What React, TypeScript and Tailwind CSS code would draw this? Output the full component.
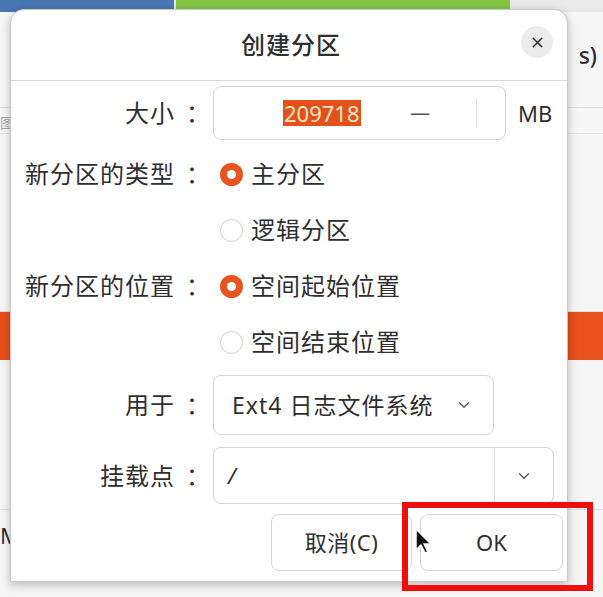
import { X, ChevronDown } from 'lucide-react'

const font = "font-['Noto_Sans','Noto_Sans_CJK_SC',sans-serif]"

function Radio({ checked, label }: { checked?: boolean; label: string }) {
  return (
    <div className="flex items-center gap-[8px] h-[56px]">
      {checked ? (
        <span className="w-[23px] h-[23px] rounded-full bg-[#e8531f] flex items-center justify-center">
          <span className="w-[9px] h-[9px] rounded-full bg-white"></span>
        </span>
      ) : (
        <span className="w-[23px] h-[23px] rounded-full border-[1.5px] border-[#cfcfcf] bg-white"></span>
      )}
      <span className="tracking-[1px]">{label}</span>
    </div>
  )
}

function Label({ text, className = '' }: { text: string; className?: string }) {
  return (
    <div className={`text-right pr-[2px] tracking-[1px] ${className}`}>
      {text}
      <span className="ml-[11px]">：</span>
    </div>
  )
}

function Cursor() {
  return (
    <svg width="18" height="28" viewBox="0 0 18 28" className="absolute left-[414px] top-[527px]">
      <path d="M2 2 L2 23 L7 18 L11 26 L14 25 L10 17 L17 17 Z" fill="#111" stroke="#fff" strokeWidth="1.5" strokeLinejoin="round" />
    </svg>
  )
}

export default function App() {
  return (
    <div className={`relative w-[603px] h-[597px] overflow-hidden bg-[#f6f6f6] ${font} text-[#2f2f2f]`}>
      {/* background window */}
      <div className="flex h-[12px]">
        <div className="w-[176px] bg-[#4a76b4] border-r-2 border-[#e8e8e8]"></div>
        <div className="w-[334px] bg-[#84c443]"></div>
        <div className="flex-1 bg-[#e9e9e9]"></div>
      </div>
      <div className="flex flex-col">
        <div className="h-[96px] border-b border-[#dcdcdc] flex justify-end items-start pt-[26px] pr-[6px] text-[23px] font-medium">s)</div>
        <div className="h-[26px] border-b border-[#e0e0e0] text-[#aaa] text-[14px] pt-[4px]">图</div>
        <div className="h-[178px] border-b border-[#e2e2e2]"></div>
        <div className="h-[48px] bg-[#e8501c]"></div>
        <div className="h-[150px] border-b border-[#e0e0e0]"></div>
        <div className="h-[50px] text-[22px] leading-[50px]">M</div>
      </div>

      {/* dialog */}
      <div className="absolute left-[10px] top-[9px] w-[558px] h-[573px] bg-white rounded-t-[14px] border border-[#c9c9c9] shadow-[0_3px_10px_rgba(0,0,0,0.25)] flex flex-col text-[24px]">
        <div className="relative h-[71px] border-b border-[#dadada] flex items-center justify-center">
          <span className="text-[24px] font-medium tracking-[1px] pl-[4px]">创建分区</span>
          <div className="absolute right-[14px] top-[16px] w-[32px] h-[32px] rounded-full bg-[#ececec] flex items-center justify-center">
            <X size={17} strokeWidth={2.2} color="#333" />
          </div>
        </div>

        <div className="grid grid-cols-[202px_1fr] pt-[5px]">
          <Label text="大小" className="h-[54px] leading-[54px]" />
          <div className="flex items-center gap-[12px]">
            <div className="w-[293px] h-[54px] border border-[#d4d4d4] rounded-[8px] flex items-center">
              <div className="w-[170px] pl-[69px]">
                <span className="bg-[#e4501a] text-[#fde6c9] px-[1px] text-[22px] leading-[26px] inline-block">209718</span>
              </div>
              <div className="w-[72px] flex justify-center text-[#555] text-[20px]">—</div>
              <div className="w-px h-[30px] bg-[#e2e2e2] ml-[20px]"></div>
            </div>
            <span className="text-[22px]">MB</span>
          </div>

          <Label text="新分区的类型" className="h-[56px] leading-[56px] mt-[6px]" />
          <div className="pl-[7px] mt-[6px]">
            <Radio checked label="主分区" />
          </div>
          <div></div>
          <div className="pl-[7px]">
            <Radio label="逻辑分区" />
          </div>
          <Label text="新分区的位置" className="h-[56px] leading-[56px]" />
          <div className="pl-[7px]">
            <Radio checked label="空间起始位置" />
          </div>
          <div></div>
          <div className="pl-[7px]">
            <Radio label="空间结束位置" />
          </div>

          <Label text="用于" className="h-[60px] leading-[60px] mt-[5px]" />
          <div className="mt-[5px]">
            <div className="w-[281px] h-[60px] border border-[#d4d4d4] rounded-[8px] flex items-center pl-[18px] pr-[20px] justify-between">
              <span className="text-[23px] tracking-[1px]">Ext4 日志文件系统</span>
              <ChevronDown size={18} strokeWidth={1.6} color="#555" />
            </div>
          </div>

          <Label text="挂载点" className="h-[57px] leading-[57px] mt-[12px]" />
          <div className="mt-[12px]">
            <div className="w-[341px] h-[57px] border border-[#d4d4d4] rounded-[8px] flex items-center">
              <span className="flex-1 pl-[14px] italic text-[22px]">/</span>
              <div className="w-px h-full bg-[#dcdcdc]"></div>
              <div className="w-[58px] flex justify-center">
                <ChevronDown size={18} strokeWidth={1.6} color="#555" />
              </div>
            </div>
          </div>
        </div>

        <div className="flex justify-end gap-[8px] pr-[4px] mt-[10px]">
          <div className="w-[141px] h-[57px] border border-[#d6d6d6] rounded-[8px] flex items-center justify-center text-[22px] tracking-[0.5px]">取消(C)</div>
          <div className="w-[143px] h-[57px] border border-[#d6d6d6] rounded-[8px] flex items-center justify-center text-[22px]">OK</div>
        </div>
      </div>

      {/* red highlight */}
      <div className="absolute left-[402px] top-[502px] w-[191px] h-[89px] border-[6px] border-[#f00d0d]"></div>
      <Cursor />
    </div>
  )
}
